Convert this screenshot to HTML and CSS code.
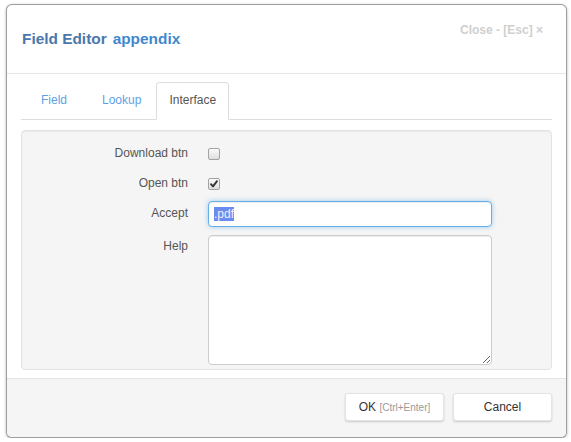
FILE: index.html
```html
<!DOCTYPE html>
<html>
<head>
<meta charset="utf-8">
<link rel="stylesheet" href="styles.css">
</head>
<body>
<div class="modal">
  <div class="modal-header">
    <h4 class="title"><span class="title-main">Field Editor</span><span class="title-sub">appendix</span></h4>
    <div class="close">Close - [Esc] ×</div>
  </div>
  <div class="modal-body">
    <ul class="tabs">
      <li class="tab tab-field">Field</li>
      <li class="tab tab-lookup">Lookup</li>
      <li class="tab active">Interface</li>
    </ul>
    <div class="well">
      <div class="form-grid">
        <label class="lbl">Download btn</label>
        <div class="ctl"><span class="cbx"></span></div>
        <label class="lbl">Open btn</label>
        <div class="ctl"><span class="cbx"><svg width="10" height="10" viewBox="0 0 10 10"><path d="M2 5.2 L4 7.4 L8 2.2" fill="none" stroke="#333" stroke-width="1.9" stroke-linecap="round" stroke-linejoin="round"/></svg></span></div>
        <label class="lbl">Accept</label>
        <div class="ctl"><div class="input focused"><span class="sel">.pdf</span></div></div>
        <label class="lbl lbl-help">Help</label>
        <div class="ctl ctl-help"><textarea class="textarea"></textarea></div>
      </div>
    </div>
  </div>
  <div class="modal-footer">
    <button class="btn btn-ok">OK <span class="hint">[Ctrl+Enter]</span></button>
    <button class="btn">Cancel</button>
  </div>
</div>
</body>
</html>
```
FILE: styles.css
```css
* { box-sizing: border-box; }
html, body { margin: 0; padding: 0; background: #fff; }
body {
  font-family: "Liberation Sans", Arial, sans-serif;
  font-size: 12px;
  color: #555;
}
.modal {
  margin: 4px 0 0 6px;
  width: 561px;
  height: 434px;
  border: 1px solid rgba(0,0,0,0.38);
  border-radius: 6px;
  box-shadow: 0 1px 3px rgba(0,0,0,0.3);
  background: #fff;
  display: flex;
  flex-direction: column;
  overflow: hidden;
}
.modal-header {
  height: 69px;
  border-bottom: 1px solid #e5e5e5;
  padding: 17px 23px 0 15px;
  display: flex;
  justify-content: space-between;
  align-items: flex-start;
}
.title {
  margin: 7px 0 0 0;
  font-size: 15.4px;
  line-height: 20px;
  font-weight: bold;
}
.title-main { color: #4a77ad; }
.title-sub { color: #3f88d0; margin-left: 6px; }
.close {
  font-size: 12px;
  line-height: 17px;
  font-weight: bold;
  color: #cfcfcf;
}
.modal-body {
  padding: 8px 14px 8px 14px;
}
.tabs {
  list-style: none;
  margin: 0;
  padding: 0 0 0 7px;
  display: flex;
  border-bottom: 1px solid #ddd;
}
.tab {
  margin-bottom: -1px;
  padding: 9px 12px 10px;
  line-height: 17px;
  border: 1px solid transparent;
  border-radius: 4px 4px 0 0;
  color: #5e9fe4;
}
.tab-field { margin-right: 9px; }
.tab-lookup { margin-right: 2px; }
.tab.active {
  color: #555;
  background: #fff;
  border-color: #ddd;
  border-bottom-color: #fff;
}
.well {
  margin-top: 10px;
  height: 240px;
  background: #f5f5f5;
  border: 1px solid #e3e3e3;
  border-radius: 4px;
  box-shadow: inset 0 1px 1px rgba(0,0,0,0.05);
  padding: 10px 0 4px 0;
}
.form-grid {
  display: grid;
  grid-template-columns: 166px 284px;
  grid-template-rows: 26px 26px 26px auto;
  column-gap: 20px;
  row-gap: 4px;
}
.lbl {
  text-align: right;
  line-height: 17px;
  padding-top: 4px;
  color: #555;
}
.lbl-help { padding-top: 3px; margin-top: 4px; }
.ctl-help { margin-top: 4px; }
.ctl { display: flex; align-items: flex-start; }
.cbx {
  margin-top: 7px;
  width: 12px;
  height: 12px;
  border: 1px solid #a3a3a3;
  border-radius: 2px;
  background: linear-gradient(#fafafa, #dedede);
  display: flex;
  align-items: center;
  justify-content: center;
}
.input {
  width: 284px;
  height: 26px;
  border: 1px solid #66afe9;
  border-radius: 4px;
  background: #fff;
  box-shadow: inset 0 1px 1px rgba(0,0,0,0.075), 0 0 5px rgba(102,175,233,0.6);
  padding: 0 5px;
  display: flex;
  align-items: center;
}
.sel {
  background: #6a8cee;
  color: #f2f0ff;
  line-height: 14px;
  font-size: 12px;
}
.textarea {
  display: block;
  width: 284px;
  height: 130px;
  margin: 0;
  border: 1px solid #ccc;
  border-radius: 4px;
  background: #fff;
  box-shadow: inset 0 1px 1px rgba(0,0,0,0.075);
  font-family: "Liberation Sans", Arial, sans-serif;
  font-size: 12px;
  resize: vertical;
  outline: none;
}
.modal-footer {
  flex: 1;
  background: #f5f5f5;
  border-top: 1px solid #e5e5e5;
  padding: 14px 14px 0 0;
  display: flex;
  justify-content: flex-end;
  align-items: flex-start;
  gap: 9px;
}
.btn {
  min-width: 99px;
  height: 28px;
  padding: 0 12px;
  background: #fff;
  border: 1px solid #e4e4e4;
  border-radius: 3px;
  box-shadow: 0 1px 2px rgba(0,0,0,0.18);
  font-family: "Liberation Sans", Arial, sans-serif;
  font-size: 12px;
  color: #333;
  line-height: 17px;
}
.hint { font-size: 10px; color: #999; }
```
